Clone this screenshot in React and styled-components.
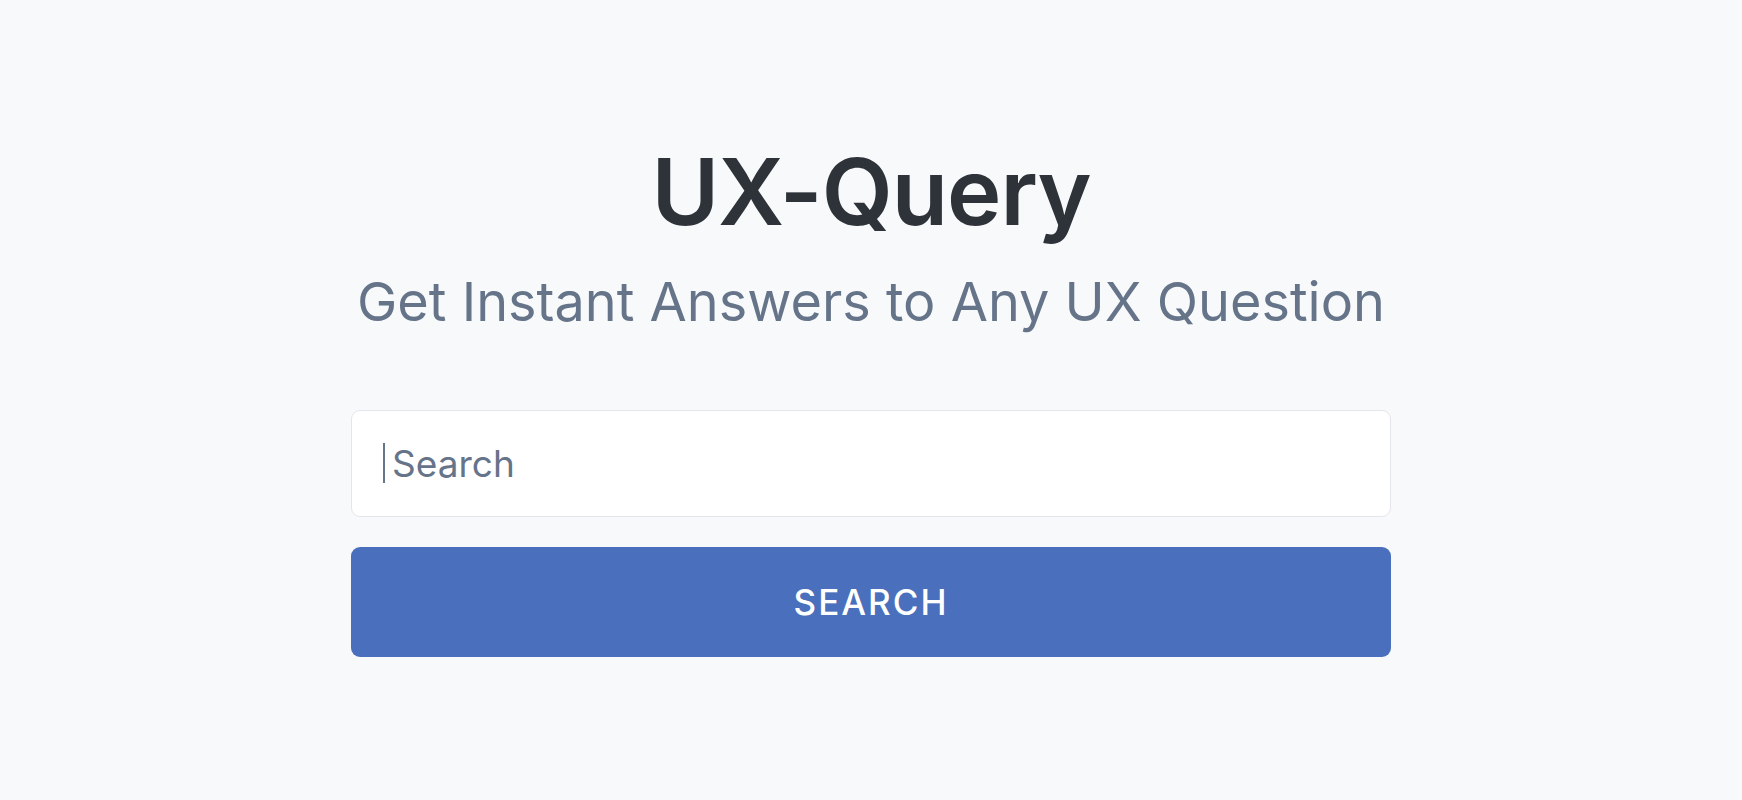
import styled, { createGlobalStyle } from "styled-components";
import { useState } from "react";

const GlobalStyle = createGlobalStyle`
  html, body {
    margin: 0;
    padding: 0;
    background: #f8f9fb;
  }
  body {
    font-family: "Inter", "Open Sans", sans-serif;
  }
`;

const Page = styled.main`
  min-height: 100vh;
  display: flex;
  justify-content: center;
  box-sizing: border-box;
  padding-top: 134px;
`;

const Panel = styled.section`
  width: 1040px;
  display: flex;
  flex-direction: column;
  align-items: center;
`;

const Title = styled.h1`
  margin: 0;
  font-size: 92px;
  line-height: 116px;
  font-weight: 600;
  color: #2e333a;
  letter-spacing: -1px;
`;

const Subtitle = styled.p`
  margin: 20px 0 0;
  font-size: 54px;
  line-height: 64px;
  font-weight: 400;
  color: #66748a;
`;

const Form = styled.form`
  width: 100%;
  display: flex;
  flex-direction: column;
  gap: 30px;
  margin-top: 76px;
`;

const Field = styled.div`
  position: relative;
  width: 100%;
`;

const Caret = styled.span`
  position: absolute;
  left: 32px;
  top: 33px;
  width: 2px;
  height: 40px;
  background: #66748a;
  pointer-events: none;
`;

const Input = styled.input`
  box-sizing: border-box;
  width: 100%;
  height: 107px;
  padding: 0 40px;
  font-family: "Inter", sans-serif;
  font-size: 37px;
  color: #2e333a;
  caret-color: transparent;
  background: #ffffff;
  border: 1px solid #e3e6ea;
  border-radius: 9px;
  outline: none;
  &::placeholder {
    color: #66748a;
  }
`;

const SubmitBtn = styled.button`
  height: 110px;
  width: 100%;
  font-family: "Inter", sans-serif;
  font-size: 35px;
  font-weight: 500;
  letter-spacing: 2px;
  color: #ffffff;
  border: none;
  border-radius: 9px;
  background-color: #4a6fbc;
  cursor: pointer;
`;

export default function App() {
  const [query, setQuery] = useState("");

  return (
    <>
      <GlobalStyle />
      <Page>
        <Panel>
          <Title>UX-Query</Title>
          <Subtitle>Get Instant Answers to Any UX Question</Subtitle>
          <Form onSubmit={(e) => e.preventDefault()}>
            <Field>
              <Input
                value={query}
                onChange={(e) => setQuery(e.target.value)}
                placeholder="Search"
              />
              {!query && <Caret />}
            </Field>
            <SubmitBtn type="submit">SEARCH</SubmitBtn>
          </Form>
        </Panel>
      </Page>
    </>
  );
}
